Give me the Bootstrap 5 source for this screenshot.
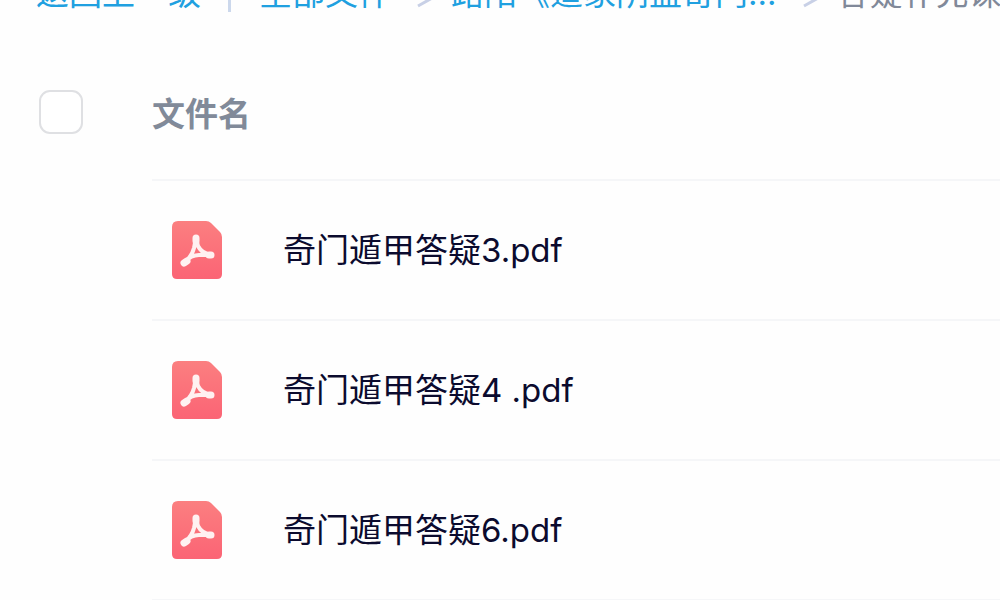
<!DOCTYPE html>
<html lang="zh-CN">
<head>
<meta charset="utf-8">
<meta name="viewport" content="width=device-width, initial-scale=1">
<title>全部文件</title>
<link href="https://cdn.jsdelivr.net/npm/bootstrap@5.3.0/dist/css/bootstrap.min.css" rel="stylesheet">
<style>
body{font-family:Inter,"Noto Sans CJK SC",sans-serif;font-size:33px;line-height:40px;color:#0b0b2e;background:#fefefe;overflow:hidden}
a{text-decoration:none}
.crumbs{height:59px;padding-left:36px;color:#818999;margin-top:-27px;white-space:nowrap}
.crumbs a{color:#20a0e0}
.split{width:3px;height:28px;background:#ccd8ec;margin:11px 28px 0 27px}
.sep{stroke:#c8d0e6;stroke-width:3;fill:none;margin:7px 14px 0 26px}
.files{table-layout:fixed;width:100%}
.files th,.files td{padding:0;vertical-align:middle}
.files .pick{padding-left:39px}
.files .kind{padding-left:19px}
.col-pick{width:152px}
.col-kind{width:131px}
.files .line{border-bottom:2px solid #f5f6f8}
.files thead tr{height:148px}
.files thead .pick{padding-top:12px}
.files tbody tr{height:140px}
.files .form-check-input{width:44px;height:44px;margin:0;border:2px solid #dfe0e3;border-radius:11px;display:block}
.files tbody a{color:#0b0b2e}
.files .heading{color:#818a99;font-weight:700;padding-top:16px}
</style>
</head>
<body>
<nav class="crumbs d-flex" aria-label="路径">
<a href="#">返回上一级</a><span class="split flex-shrink-0"></span><a href="#">全部文件</a>
<svg class="sep flex-shrink-0" width="20" height="34" viewBox="0 0 20 34"><path d="M1 26L17 17 1 8"/></svg>
<a href="#">路阳《道家阴盘奇门...</a>
<svg class="sep flex-shrink-0" width="20" height="34" viewBox="0 0 20 34"><path d="M1 26L17 17 1 8"/></svg>
<span>答疑补充课</span>
</nav>
<svg width="0" height="0" class="position-absolute" aria-hidden="true">
<linearGradient id="red" x2="0" y2="1"><stop stop-color="#fb7f80"/><stop offset="1" stop-color="#fb6475"/></linearGradient>
<symbol id="pdf" viewBox="0 0 52 60">
<path fill="url(#red)" d="M7 1H35Q38 1 40 3L49 12Q51 14 51 17V54Q51 59 46 59H6Q1 59 1 54V7Q1 1 7 1Z"/>
<path fill="none" stroke="#fff1f1" stroke-width="4" stroke-linejoin="round" d="M25 18L23 28Q21 36 14 42M25 18L27 26Q31 34 41 35M14 42Q20 35 28 35L41 35"/>
<g stroke="#fff1f1" stroke-width="7" stroke-linecap="round"><path d="M25 18V21M13 43L16 41M38 35H40"/></g>
</symbol>
</svg>
<table class="files">
<colgroup><col class="col-pick"><col class="col-kind"><col></colgroup>
<thead><tr><td class="pick"><input class="form-check-input" type="checkbox" aria-label="全选"></td><th class="heading line" colspan="2">文件名</th></tr></thead>
<tbody>
<tr><td class="pick"></td><td class="kind line"><svg class="d-block" width="52" height="60"><use href="#pdf"/></svg></td><td class="line"><a href="#">奇门遁甲答疑3.pdf</a></td></tr>
<tr><td class="pick"></td><td class="kind line"><svg class="d-block" width="52" height="60"><use href="#pdf"/></svg></td><td class="line"><a href="#">奇门遁甲答疑4 .pdf</a></td></tr>
<tr><td class="pick"></td><td class="kind line"><svg class="d-block" width="52" height="60"><use href="#pdf"/></svg></td><td class="line"><a href="#">奇门遁甲答疑6.pdf</a></td></tr>
</tbody>
</table>
<script src="https://cdn.jsdelivr.net/npm/bootstrap@5.3.0/dist/js/bootstrap.bundle.min.js"></script>
</body>
</html>
